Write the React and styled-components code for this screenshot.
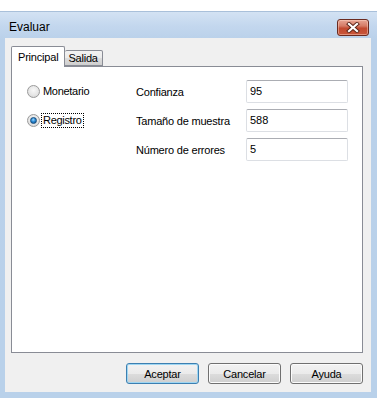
import React from "react";
import styled, { createGlobalStyle } from "styled-components";

const Global = createGlobalStyle`
  html, body { margin: 0; padding: 0; background: #ffffff; }
  body { font-family: "Liberation Sans", Arial, sans-serif; font-size: 11px; color: #000; }
  * { box-sizing: border-box; }
`;

const Window = styled.div`
  margin-top: 11px;
  width: 377px;
  height: 387px;
  display: flex;
  flex-direction: column;
  background: linear-gradient(to bottom, #d3e2f3 0px, #c3d7ee 14px, #bad1ea 27px, #b9d1ea 100%);
  border-top: 1px solid #a9c0da;
`;

const TitleBar = styled.div`
  height: 26px;
  display: flex;
  align-items: flex-start;
  justify-content: space-between;
  padding: 7px 8px 0 9px;
`;

const Title = styled.div`
  font-family: "Liberation Sans", Arial, sans-serif;
  font-size: 12px;
  line-height: 17px;
  color: #000;
`;

const CloseButton = styled.div`
  width: 32px;
  height: 17px;
  border: 1px solid #6b2b20;
  border-radius: 3px;
  background: linear-gradient(to bottom, #e8a695 0%, #d57b66 40%, #c24a30 55%, #c9573b 100%);
  box-shadow: inset 0 0 0 1px rgba(255, 220, 205, 0.45);
  display: flex;
  align-items: center;
  justify-content: center;
`;

const Client = styled.div`
  flex: 1;
  margin: 0 6px 6px 5px;
  background: #f0f0f0;
  display: flex;
  flex-direction: column;
  padding: 8px 8px 8px 6px;
`;

const TabStrip = styled.div`
  height: 20px;
  display: flex;
  align-items: flex-end;
  position: relative;
  z-index: 1;
`;

const Tab = styled.div`
  height: ${(p) => (p.$active ? "21px" : "16px")};
  margin-bottom: ${(p) => (p.$active ? "-1px" : "0")};
  padding: ${(p) => (p.$active ? "3px 6px 0 6px" : "0 4px 0 3px")};
  border: 1px solid #898c95;
  border-bottom: ${(p) => (p.$active ? "none" : "1px solid #898c95")};
  border-left: ${(p) => (p.$first || p.$active ? "1px solid #898c95" : "none")};
  border-radius: 2px 2px 0 0;
  background: ${(p) =>
    p.$active ? "#ffffff" : "linear-gradient(to bottom, #f2f2f2 0%, #ebebeb 50%, #dddddd 51%, #cfcfcf 100%)"};
  display: flex;
  align-items: ${(p) => (p.$active ? "flex-start" : "center")};
  font-size: 11px;
  line-height: 14px;
  letter-spacing: -0.2px;
  color: #000;
`;

const Panel = styled.div`
  flex: 1;
  background: #ffffff;
  border: 1px solid #898c95;
  padding: 13px 0 0 15px;
`;

const Grid = styled.div`
  display: grid;
  grid-template-columns: 109px 110px 102px;
  grid-auto-rows: 23px;
  row-gap: 6px;
`;

const RadioRow = styled.label`
  display: flex;
  align-items: center;
  gap: 1px;
  grid-column: 1;
  grid-row: ${(p) => p.$row};
`;

const RadioCircle = styled.span`
  width: 13px;
  height: 13px;
  border-radius: 50%;
  border: 1px solid #9a9a9a;
  background: radial-gradient(circle at 50% 40%, #f8f8f8 0%, #e6e6e6 55%, #d0d0d0 100%);
  display: flex;
  align-items: center;
  justify-content: center;
  flex-shrink: 0;
`;

const RadioDot = styled.span`
  width: 7px;
  height: 7px;
  border-radius: 50%;
  background: radial-gradient(circle at 45% 35%, #9fd8ff 0%, #2a8ad4 45%, #0d4f8c 100%);
  border: 1px solid #174c7c;
`;

const RadioText = styled.span`
  font-size: 11px;
  line-height: 13px;
  letter-spacing: -0.3px;
  padding: 0 1px;
  border: 1px dotted ${(p) => (p.$focused ? "#000" : "transparent")};
`;

const Label = styled.div`
  grid-column: 2;
  grid-row: ${(p) => p.$row};
  display: flex;
  align-items: center;
  font-size: 11px;
  letter-spacing: -0.2px;
`;

const Input = styled.div`
  grid-column: 3;
  grid-row: ${(p) => p.$row};
  border: 1px solid #dcdfe4;
  border-top-color: #abadb3;
  border-radius: 2px;
  background: #fff;
  padding: 3px 0 0 3px;
  font-size: 11px;
  line-height: 14px;
`;

const Footer = styled.div`
  margin-top: 10px;
  display: flex;
  justify-content: flex-end;
  gap: 9px;
`;

const Button = styled.div`
  width: 73px;
  height: 21px;
  border: 1px solid ${(p) => (p.$default ? "#3c7fb1" : "#707070")};
  border-radius: 3px;
  background: linear-gradient(to bottom, #f2f2f2 0%, #ebebeb 50%, #dddddd 51%, #cfcfcf 100%);
  box-shadow: inset 0 0 0 1px ${(p) => (p.$default ? "#9fd6f2" : "#fbfbfb")};
  display: flex;
  align-items: center;
  justify-content: center;
  font-size: 11px;
  letter-spacing: -0.2px;
  color: #000;
`;

const CloseIcon = () => (
  <svg width="14" height="11" viewBox="0 0 14 11">
    <path d="M3 2 L11 9 M11 2 L3 9" stroke="#5a2418" strokeWidth="4" strokeLinecap="square" />
    <path d="M3 2 L11 9 M11 2 L3 9" stroke="#ffffff" strokeWidth="2.2" strokeLinecap="square" />
  </svg>
);

export default function App() {
  return (
    <>
      <Global />
      <Window>
        <TitleBar>
          <Title>Evaluar</Title>
          <CloseButton>
            <CloseIcon />
          </CloseButton>
        </TitleBar>
        <Client>
          <TabStrip>
            <Tab $active $first>Principal</Tab>
            <Tab>Salida</Tab>
          </TabStrip>
          <Panel>
            <Grid>
              <RadioRow $row={1}>
                <RadioCircle />
                <RadioText>Monetario</RadioText>
              </RadioRow>
              <RadioRow $row={2}>
                <RadioCircle>
                  <RadioDot />
                </RadioCircle>
                <RadioText $focused>Registro</RadioText>
              </RadioRow>
              <Label $row={1}>Confianza</Label>
              <Input $row={1}>95</Input>
              <Label $row={2}>Tamaño de muestra</Label>
              <Input $row={2}>588</Input>
              <Label $row={3}>Número de errores</Label>
              <Input $row={3}>5</Input>
            </Grid>
          </Panel>
          <Footer>
            <Button $default>Aceptar</Button>
            <Button>Cancelar</Button>
            <Button>Ayuda</Button>
          </Footer>
        </Client>
      </Window>
    </>
  );
}
